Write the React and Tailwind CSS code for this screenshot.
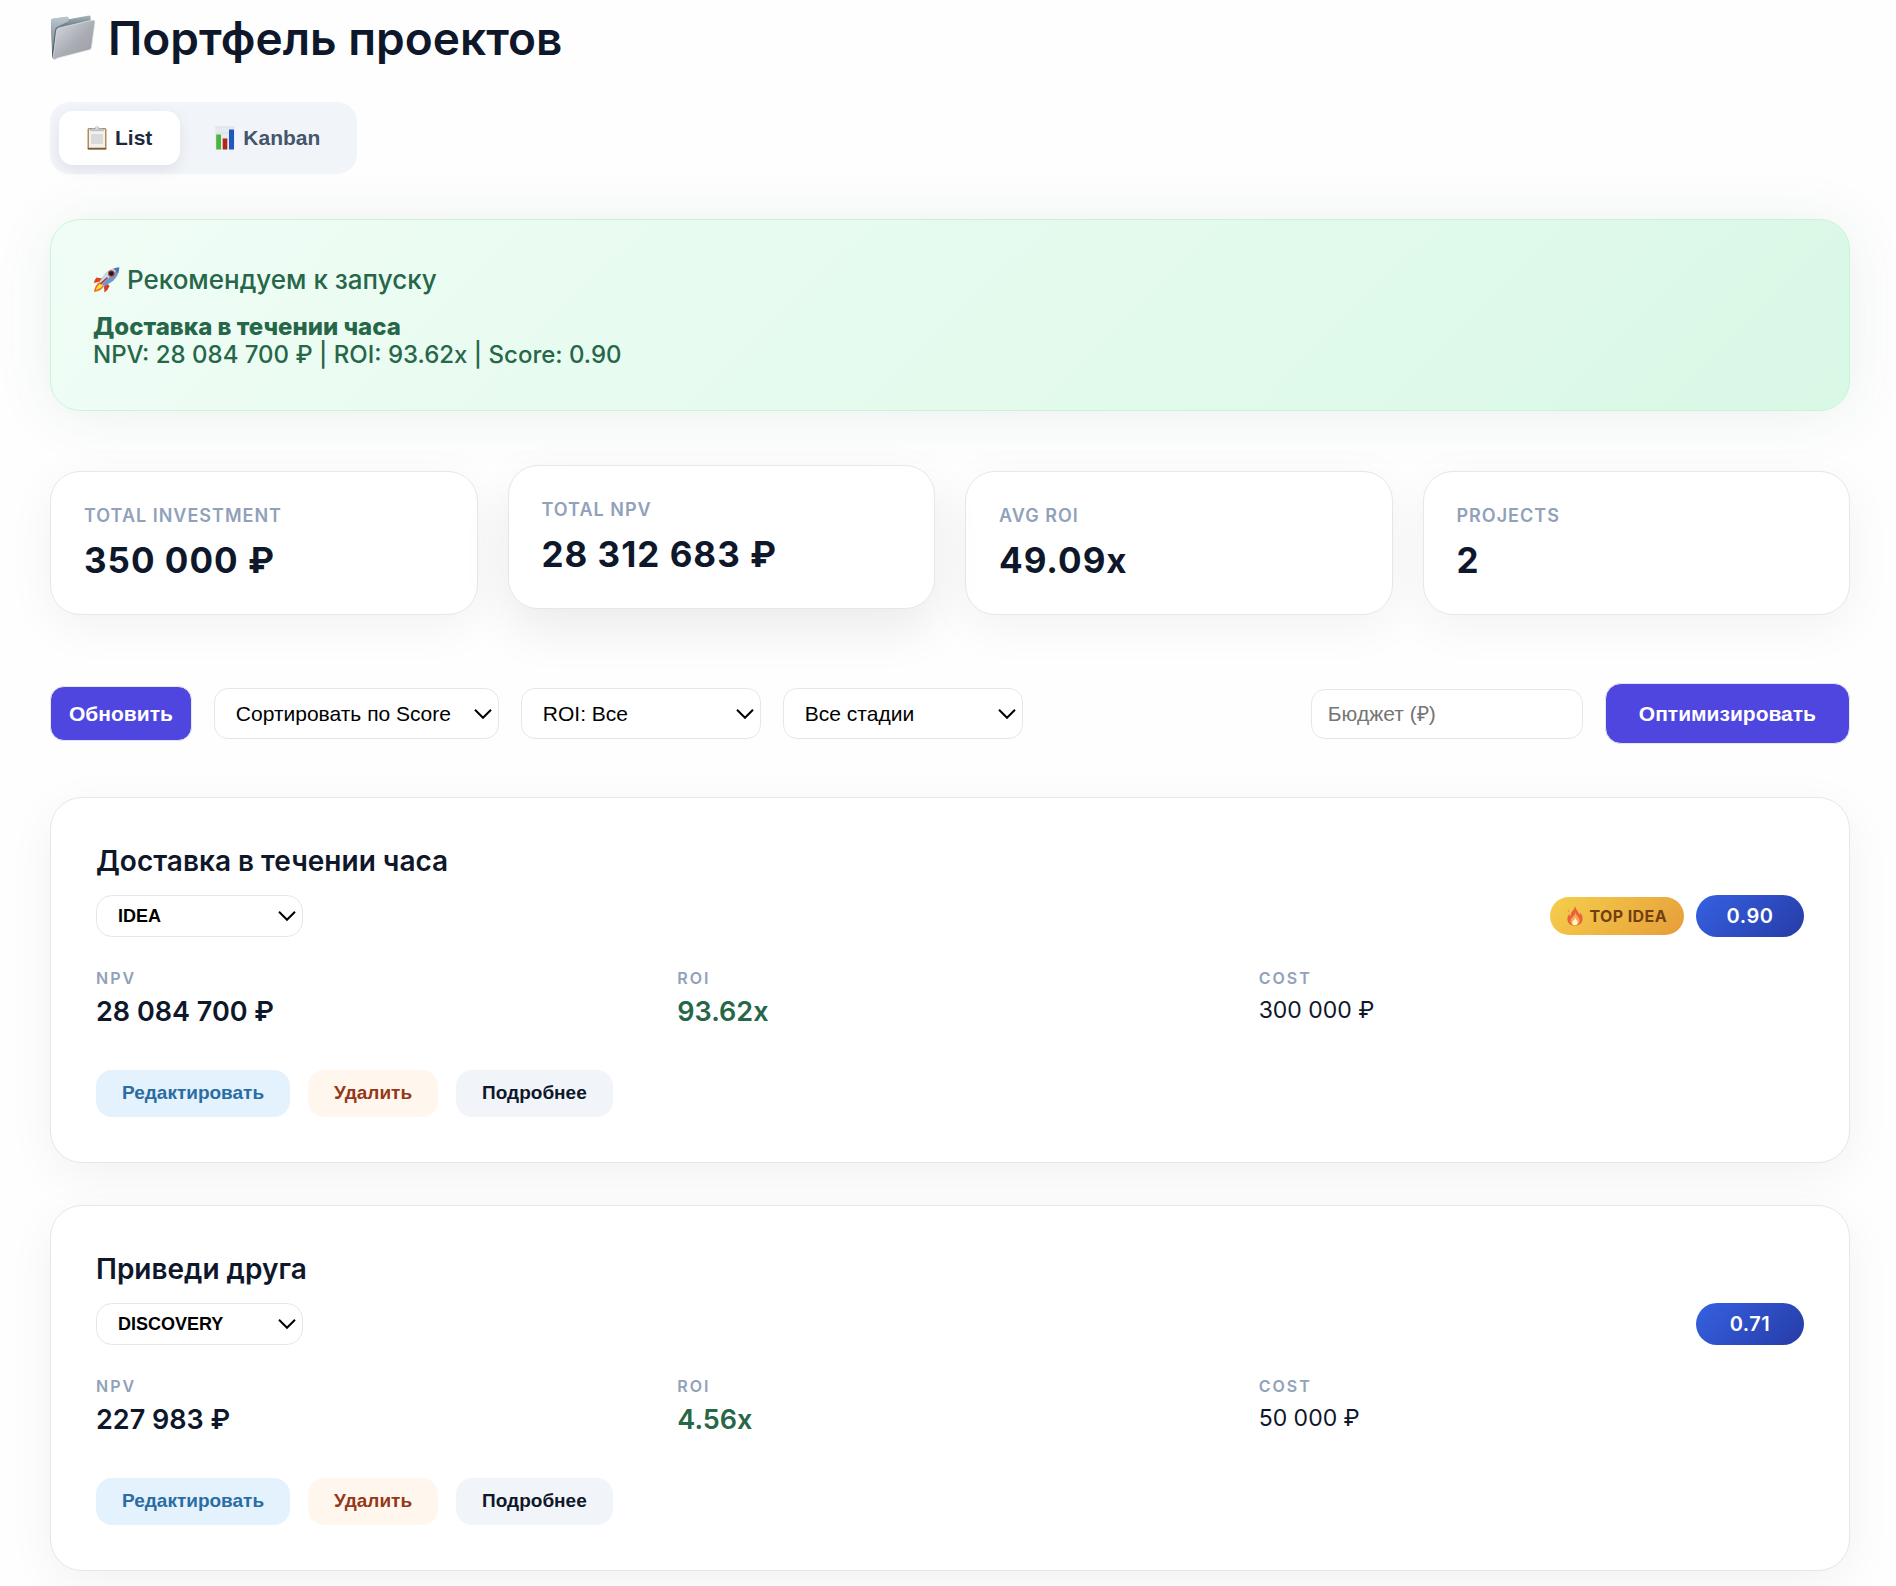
import { useState } from "react"

const stats = [
  { label: "Total investment", value: "350 000 ₽" },
  { label: "Total NPV", value: "28 312 683 ₽", raised: true },
  { label: "Avg ROI", value: "49.09x" },
  { label: "Projects", value: "2" },
]

const projects = [
  { id: 1, name: "Доставка в течении часа", stage: "IDEA", npv: "28 084 700 ₽", roi: "93.62x", cost: "300 000 ₽", score: "0.90", top: true },
  { id: 2, name: "Приведи друга", stage: "DISCOVERY", npv: "227 983 ₽", roi: "4.56x", cost: "50 000 ₽", score: "0.71", top: false },
]

const stages = ["IDEA", "DISCOVERY", "DELIVERY", "DONE"]

function FolderIcon({ className }) {
  return (
    <svg viewBox="0 0 46 48" className={className} aria-hidden="true">
      <defs>
        <linearGradient id="folderBack" x1="0" y1="0" x2="0" y2="1">
          <stop offset="0" stopColor="#a9b7bf" />
          <stop offset="0.3" stopColor="#5e6e7a" />
          <stop offset="1" stopColor="#3f4b55" />
        </linearGradient>
        <linearGradient id="folderTab" x1="0" y1="0" x2="0" y2="1">
          <stop offset="0" stopColor="#bcc7cd" />
          <stop offset="1" stopColor="#6d7c87" />
        </linearGradient>
        <linearGradient id="folderFront" x1="0" y1="0" x2="1" y2="1">
          <stop offset="0" stopColor="#d9dde3" />
          <stop offset="0.55" stopColor="#a9adb3" />
          <stop offset="1" stopColor="#999da3" />
        </linearGradient>
      </defs>
      <path d="M1 6.5 Q1 5.2 2.5 4.8 L16.5 2.8 Q18 2.6 18.4 4 L18.8 5.2 L39 1.4 Q40.6 1.3 40.6 3 L40.6 11 L6 45 Q3 46 2.2 43 Z" fill="url(#folderBack)" />
      <path d="M1 6.5 Q1 5.2 2.5 4.8 L16.5 2.8 Q18 2.6 18.4 4 L18.8 7 L7 13 Q5.4 14 5 16 L2.4 39 Z" fill="url(#folderTab)" />
      <path d="M8.8 14 L43 6 Q45.3 5.8 45 8 L41.5 33.5 Q41.2 35.3 39.5 35.8 L5 44.8 Q3 45 3.2 43 L6.6 16.4 Q7 14.5 8.8 14 Z" fill="url(#folderFront)" stroke="#e5e8ec" strokeWidth="0.7" />
    </svg>
  )
}

function ClipboardIcon({ className }) {
  return (
    <svg viewBox="0 0 20 24" className={className} aria-hidden="true">
      <rect x="0.5" y="2" width="19" height="21.5" rx="1.5" fill="#b08d57" />
      <rect x="0.5" y="22" width="19" height="1.6" rx="0.8" fill="#7b5b31" />
      <rect x="2" y="3.4" width="16" height="18.2" fill="#f1f1f1" />
      <rect x="4" y="8" width="12" height="10" fill="#dadada" />
      <path d="M3.4 4.8 L4.4 2.6 H8 Q8.2 0.5 10 0.5 Q11.8 0.5 12 2.6 H15.6 L16.6 4.8 Z" fill="#c4c7cb" stroke="#9b9ea3" strokeWidth="0.4" />
      <circle cx="10" cy="2" r="0.8" fill="#ffffff" />
    </svg>
  )
}

function ChartIcon({ className }) {
  return (
    <svg viewBox="0 0 20 24" className={className} aria-hidden="true">
      <rect x="0.3" y="0.5" width="19.4" height="23" fill="#e6ebf2" />
      <path d="M0.3 1 H19.7 M0.3 7 H19.7 M0.3 13 H19.7" stroke="#ccd3dc" strokeWidth="0.5" />
      <rect x="1.2" y="8.5" width="4.8" height="15" fill="#4fb53a" />
      <rect x="7.7" y="12.5" width="4.6" height="11" fill="#b3261e" />
      <rect x="14" y="3.5" width="5" height="20" fill="#2257bf" />
    </svg>
  )
}

function RocketIcon({ className }) {
  return (
    <svg viewBox="0 0 27 26" className={className} aria-hidden="true">
      <path d="M9.5 11.5 L3.5 10.5 Q1.5 12.5 0.8 16 L7 14.5 Z" fill="#e2431e" />
      <path d="M14 16.5 L16.5 19 Q15 23 11.5 25.5 L11 19.5 Z" fill="#d93a1c" />
      <path d="M7 15 Q2 17.5 1 25 Q8.5 24 11 19 Z" fill="#f26a1b" />
      <path d="M7.5 16.5 Q4 18.5 2.8 23.2 Q7.5 22 10 18.8 Z" fill="#ffe04a" />
      <path d="M26.3 0.6 Q18 0.8 12.5 6.5 L6.5 14.5 L11.5 19.6 L20 14 Q26 8.5 26.3 0.6 Z" fill="#7396c8" />
      <path d="M26.3 0.6 Q18 0.8 12.5 6.5 L6.5 14.5 L9 17 L21 6 Z" fill="#c9d9ec" />
      <path d="M26.3 0.6 Q23 0.7 20.4 1.7 L25.1 6.2 Q26.2 3.5 26.3 0.6 Z" fill="#5077b4" />
      <circle cx="18.3" cy="6.5" r="3.3" fill="#c9402a" />
      <circle cx="18.3" cy="6.5" r="2.3" fill="#191c24" />
      <path d="M8 16.5 L14 11" stroke="#a13325" strokeWidth="1.5" strokeLinecap="round" />
    </svg>
  )
}

function FireIcon({ className }) {
  return (
    <svg viewBox="0 0 16 20" className={className} aria-hidden="true">
      <path d="M8.2 0.3 Q8.8 3.5 11 6 Q12.4 7.6 12.6 9 Q13.4 8.2 13.3 6.6 Q16 10 15.6 13.5 Q14.8 19.6 8 19.8 Q1 19.6 0.4 13.8 Q0.2 10.5 2.2 8 Q2.4 9.6 3.4 10.2 Q3.4 7 5.6 4.8 Q7.8 2.6 8.2 0.3 Z" fill="#e8603f" />
      <path d="M8.6 6.5 Q9 9 11 10.8 Q13.2 13 12.6 15.6 Q11.6 19.4 8 19.4 Q4 19.2 3.4 15.6 Q3 13.2 5.4 11.2 Q8.2 9 8.6 6.5 Z" fill="#f9a94c" />
      <path d="M8.2 11.5 Q8.6 13 10 14.4 Q11.4 16 10.4 17.8 Q9.6 19.3 8 19.3 Q5.8 19.2 5.2 17.4 Q4.8 15.8 6.4 14.4 Q8 13.2 8.2 11.5 Z" fill="#fff6c4" />
      <path d="M1.6 3.6 Q2.6 5 1.6 6.4 Q0.6 5.2 1.6 3.6 Z" fill="#ee7a4f" />
    </svg>
  )
}

function Select({ label, options, defaultValue, className }) {
  return (
    <div className="grid items-center">
      <select
        aria-label={label}
        defaultValue={defaultValue}
        className={`col-start-1 row-start-1 appearance-none border border-slate-200 bg-white text-black ${className}`}
      >
        {options.map((option) => (
          <option key={option}>{option}</option>
        ))}
      </select>
      <svg
        viewBox="0 0 18 10"
        className="col-start-1 row-start-1 mr-[7px] h-2.5 w-[18px] justify-self-end pointer-events-none"
        fill="none"
        stroke="#000000"
        strokeWidth="2"
        aria-hidden="true"
      >
        <path d="M1 0.8 L9 8.8 L17 0.8" />
      </svg>
    </div>
  )
}

function StatCard({ label, value, raised }) {
  return (
    <div
      className={`rounded-[30px] border border-slate-200 bg-white px-[33px] py-[30px] ${
        raised
          ? "-translate-y-1.5 shadow-[0_20px_50px_rgba(0,0,0,0.08)]"
          : "shadow-[0_12px_48px_rgba(0,0,0,0.05)]"
      }`}
    >
      <div className="text-lg leading-7 font-semibold tracking-[1px] text-slate-400 uppercase">{label}</div>
      <div className="mt-1.5 text-[35px] leading-12 font-bold tracking-[1px]">{value}</div>
    </div>
  )
}

function Metric({ label, children }) {
  return (
    <div>
      <div className="text-base leading-5 font-semibold tracking-[2px] text-slate-400">{label}</div>
      {children}
    </div>
  )
}

function ProjectCard({ project }) {
  return (
    <article className="rounded-[32px] border border-slate-200 bg-white p-[45px] shadow-[0_12px_48px_rgba(0,0,0,0.05)]">
      <h2 className="text-[28px] leading-9 font-semibold">{project.name}</h2>
      <div className="mt-4 flex items-center justify-between">
        <Select
          label="Стадия"
          options={stages}
          defaultValue={project.stage}
          className="h-[42px] w-[207px] rounded-2xl pl-[21px] font-[Liberation_Sans,sans-serif] text-lg font-bold"
        />
        <div className="flex items-center gap-3">
          {project.top && (
            <span className="flex h-[38px] items-center gap-1.5 rounded-full bg-linear-135 from-[#f5cf4b] to-[#e69d3a] px-[17px] text-base font-bold tracking-wide text-[#713f12]">
              <FireIcon className="h-5 w-4" />
              TOP IDEA
            </span>
          )}
          <span className="flex h-[42px] w-[108px] items-center justify-center rounded-full bg-linear-135 from-[#3661e2] to-[#263ca6] text-xl font-semibold tracking-wide text-white">
            {project.score}
          </span>
        </div>
      </div>

      <div className="mt-[31px] grid grid-cols-3 gap-9">
        <Metric label="NPV">
          <div className="mt-2 text-[27px] leading-8 font-semibold">{project.npv}</div>
        </Metric>
        <Metric label="ROI">
          <div className="mt-2 text-[27px] leading-8 font-semibold text-[#276749]">{project.roi}</div>
        </Metric>
        <Metric label="COST">
          <div className="mt-2 text-[23px] leading-7">{project.cost}</div>
        </Metric>
      </div>

      <div className="mt-[42px] flex gap-[18px] font-[Liberation_Sans,sans-serif] text-[19px] font-bold">
        <button className="h-[47px] rounded-2xl bg-[#e3f2fd] px-[26px] text-[#2b6ca3]">Редактировать</button>
        <button className="h-[47px] rounded-2xl bg-[#fff7ed] px-[26px] text-[#953819]">Удалить</button>
        <button className="h-[47px] rounded-2xl bg-slate-100 px-[26px] text-slate-900">Подробнее</button>
      </div>
    </article>
  )
}

export default function App() {
  const [view, setView] = useState("list")

  const tabs = [
    { id: "list", icon: ClipboardIcon, label: "List" },
    { id: "kanban", icon: ChartIcon, label: "Kanban" },
  ]

  return (
    <main className="min-h-screen bg-[#fefefe] pt-2 pr-[46px] pb-4 pl-[50px] font-[Inter,sans-serif] text-slate-900">
      <h1 className="flex items-center gap-3 text-[46px] leading-[60px] font-semibold">
        <FolderIcon className="h-12 w-[46px]" />
        Портфель проектов
      </h1>

      {/* VIEW SWITCH */}
      <div className="mt-[34px] flex w-fit gap-[7px] rounded-[20px] bg-slate-100 p-[9px]">
        {tabs.map((tab) => (
          <button
            key={tab.id}
            onClick={() => setView(tab.id)}
            className={`flex h-[54px] items-center gap-2 rounded-[14px] px-7 font-[Liberation_Sans,sans-serif] text-[21px] font-bold ${
              view === tab.id ? "bg-white text-slate-800 shadow-[0_5px_15px_rgba(0,0,0,0.08)]" : "text-slate-600"
            }`}
          >
            <tab.icon className="h-6 w-5" />
            {tab.label}
          </button>
        ))}
      </div>

      {/* RECOMMENDATION */}
      <section className="mt-[45px] rounded-[30px] border border-[#c6f6d5] bg-linear-135 from-[#f0fdf6] to-[#d9f8e6] px-[42px] pt-[42px] pb-[41px] font-medium text-[#276749] shadow-[0_4px_60px_rgba(39,103,73,0.09)]">
        <h2 className="flex items-center gap-[7px] text-[26px] leading-9">
          <RocketIcon className="h-[26px] w-[27px]" />
          Рекомендуем к запуску
        </h2>
        <p className="mt-[15px] text-2xl leading-7">
          <strong className="font-extrabold">Доставка в течении часа</strong>
          <br />
          NPV: 28 084 700 ₽ | ROI: 93.62x | Score: 0.90
        </p>
      </section>

      <section className="mt-[60px] grid grid-cols-4 gap-[30px]">
        {stats.map((stat) => (
          <StatCard key={stat.label} {...stat} />
        ))}
      </section>

      {/* TOOLBAR */}
      <div className="mt-[68px] flex items-center gap-[22px] font-[Liberation_Sans,sans-serif] text-[21px]">
        <button className="h-[55px] rounded-[14px] border border-slate-200 bg-[#4f46e0] px-[18px] font-bold text-white">
          Обновить
        </button>
        <Select
          label="Сортировка"
          options={["Сортировать по Score", "Сортировать по NPV", "Сортировать по ROI"]}
          className="h-[51px] w-[285px] rounded-[14px] pl-[21px]"
        />
        <Select
          label="Фильтр по ROI"
          options={["ROI: Все", "ROI > 1x", "ROI > 5x"]}
          className="h-[51px] w-[240px] rounded-[14px] pl-[21px]"
        />
        <Select
          label="Фильтр по стадии"
          options={["Все стадии", ...stages]}
          className="h-[51px] w-[240px] rounded-[14px] pl-[21px]"
        />
        <input
          type="text"
          aria-label="Бюджет"
          placeholder="Бюджет (₽)"
          className="ml-auto h-[50px] w-[272px] rounded-[14px] border border-slate-200 bg-white px-4 placeholder:text-[#757575]"
        />
        <button className="h-[61px] rounded-2xl border border-slate-200 bg-[#4f46e0] px-[33px] font-bold text-white">
          Оптимизировать
        </button>
      </div>

      <section className="mt-[53px] flex flex-col gap-[42px]">
        {projects.map((project) => (
          <ProjectCard key={project.id} project={project} />
        ))}
      </section>
    </main>
  )
}
